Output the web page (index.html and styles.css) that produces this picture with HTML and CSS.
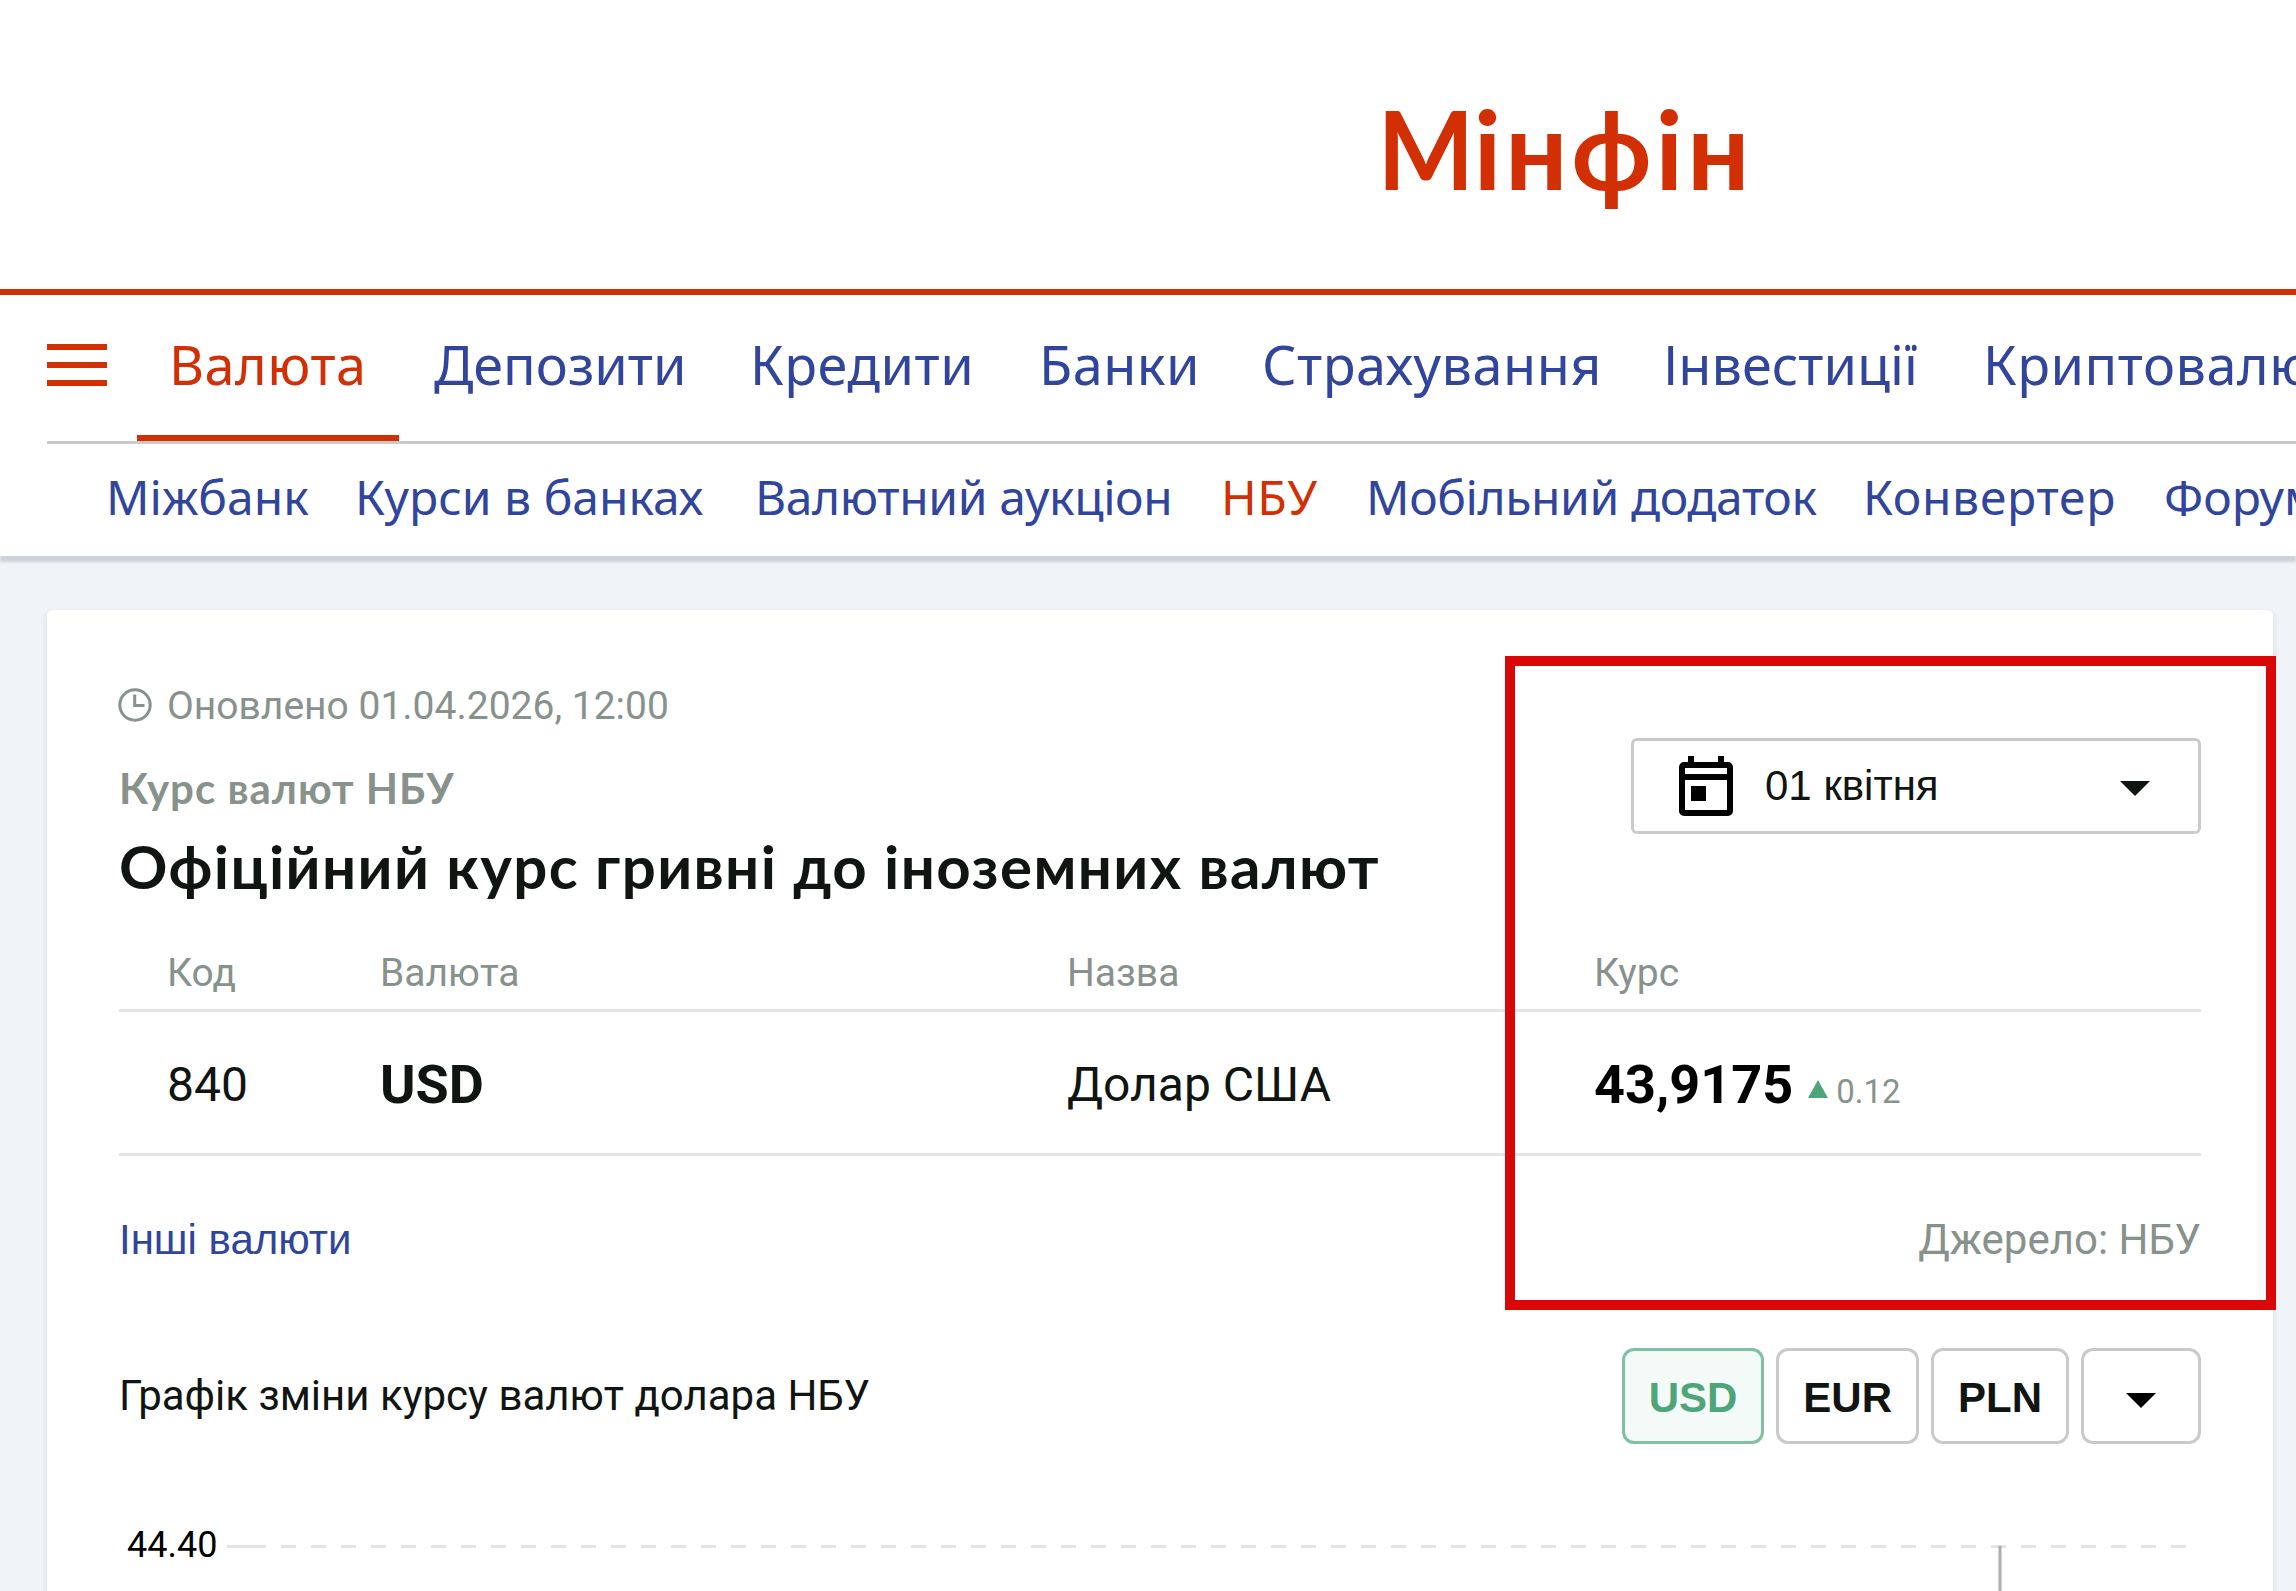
FILE: index.html
```html
<!DOCTYPE html>
<html lang="uk">
<head>
    <meta charset="UTF-8">
    <meta name="viewport" content="width=device-width, initial-scale=1.0">
    <title>Курс валют НБУ - Мінфін</title>
    <link rel="stylesheet" href="styles.css">
</head>
<body>
    <div class="header">
        <div class="logo-box"><a class="logo"><span>М</span>інфін</a></div>
        <div class="menu">
            <div class="burger"><span></span><span></span><span></span></div>
            <ul class="nav">
                <li class="active">Валюта</li>
                <li class="tight">Депозити</li>
                <li>Кредити</li>
                <li>Банки</li>
                <li>Страхування</li>
                <li class="tight">Інвестиції</li>
                <li>Криптовалюти</li>
            </ul>
        </div>
        <ul class="subnav">
            <li>Міжбанк</li>
            <li>Курси в банках</li>
            <li class="tight">Валютний аукціон</li>
            <li class="active">НБУ</li>
            <li class="tight">Мобільний додаток</li>
            <li class="loose">Конвертер</li>
            <li>Форум</li>
        </ul>
    </div>

    <div class="card">
        <div class="card-head">
            <div class="titles">
                <div class="updated">
                    <svg class="clock" width="34" height="34" viewBox="0 0 34 34">
                        <circle cx="17" cy="17" r="15.2" fill="none" stroke="#88928c" stroke-width="3"/>
                        <path d="M16.7 6.5V17.5H26.5" fill="none" stroke="#88928c" stroke-width="3"/>
                    </svg>
                    <span>Оновлено 01.04.2026, 12:00</span>
                </div>
                <h2>Курс валют НБУ</h2>
                <h1>Офіційний курс гривні до іноземних валют</h1>
            </div>
            <div class="date">
                <svg class="calendar" width="72" height="72" viewBox="0 0 24 24">
                    <path d="M6 1h2v2h8V1h2v2h1.300a1.700 1.700 0 0 1 1.700 1.700v14.600a1.700 1.700 0 0 1-1.700 1.700H4.700A1.700 1.700 0 0 1 3 19.300V4.700A1.700 1.700 0 0 1 4.700 3H6zM5 5v2h14V5zM5 9v10h14V9zM7 11h5v5H7z" fill="#000" fill-rule="evenodd"/>
                </svg>
                <span class="date-text">01 квітня</span>
                <span class="caret"></span>
            </div>
        </div>

        <div class="row row-head">
            <span>Код</span>
            <span>Валюта</span>
            <span>Назва</span>
            <span>Курс</span>
        </div>
        <div class="row row-data">
            <span>840</span>
            <b>USD</b>
            <span>Долар США</span>
            <div class="rate"><b>43,9175</b><i class="up"></i><small>0.12</small></div>
        </div>

        <div class="links">
            <a>Інші валюти</a>
            <span>Джерело: НБУ</span>
        </div>

        <div class="chart-head">
            <span>Графік зміни курсу валют долара НБУ</span>
            <div class="btns">
                <button class="selected">USD</button>
                <button>EUR</button>
                <button>PLN</button>
                <button class="more"><span class="caret"></span></button>
            </div>
        </div>
        <svg class="chart" width="2082" height="147" viewBox="0 0 2082 147">
            <text x="8" y="113">44.40</text>
            <path d="M108 102.500H132" stroke="#e4e4e4" stroke-width="3"/>
            <path d="M132 102.500H2067" stroke="#e4e4e4" stroke-width="3" stroke-dasharray="15 15"/>
            <path d="M1881 102V147" stroke="#a9adab" stroke-width="3"/>
        </svg>
    </div>

    <!-- рамка навколо курсу -->
    <div class="frame"></div>
</body>
</html>
```
FILE: styles.css
```css
*{
    margin: 0;
    padding: 0;
    box-sizing: border-box;
}
html, body{
    height: 1591px;
    overflow: hidden;
}
body{
    position: relative;
    background: #f0f4f8;
    color: #101512;
    font-family: Roboto, sans-serif;
}
ul{
    list-style: none;
}

/* header */
.header{
    height: 556px;
    background: #fff;
    box-shadow: 0 6px 3px rgba(0, 0, 0, .14);
    position: relative;
}
.logo-box{
    height: 295px;
    padding: 81px 0 0 1377px;
    border-bottom: 6px solid #d22f05;
}
.logo{
    display: block;
    font: 700 110px/132px Lato, sans-serif;
    letter-spacing: 3.6px;
    color: #d22f05;
}
.logo span{
    display: inline-block;
    margin-right: -11px;
    transform: scaleX(.93);
    transform-origin: 8px 0;
}
.menu{
    display: flex;
    height: 149px;
    margin-left: 47px;
    border-bottom: 3px solid #c9cac9;
}
.burger{
    width: 60px;
    margin: 49px 30px 0 0;
    flex: none;
}
.burger span{
    display: block;
    height: 6px;
    margin-bottom: 12px;
    background: #d22f05;
}
.nav{
    display: grid;
    grid-template-columns: 265px 315px 289px 223px 402px 319px 420px;
    font: 54px/138px "Noto Sans", sans-serif;
    letter-spacing: .5px;
    color: #30459b;
}
.nav li{
    height: 146px;
    margin-right: 3px;
    padding-left: 33px;
    white-space: nowrap;
}
.nav .active{
    padding-left: 32px;
    color: #d22f05;
    border-bottom: 6px solid #d22f05;
}
.nav .tight{
    padding-left: 32px;
    letter-spacing: 0;
}
.subnav{
    display: grid;
    grid-template-columns: 249px 400px 466px 145px 497px 301px 200px;
    padding-left: 106px;
    font: 48px/106px "Noto Sans", sans-serif;
    color: #30459b;
    white-space: nowrap;
}
.subnav .active{
    letter-spacing: .7px;
    color: #d22f05;
}
.subnav .tight{
    letter-spacing: -.4px;
}
.subnav .loose{
    letter-spacing: .7px;
}

/* card */
.card{
    width: 2226px;
    height: 981px;
    margin: 54px 0 0 47px;
    padding: 73px 72px 0;
    background: #fff;
    border-radius: 6px 6px 0 0;
    box-shadow: 0 3px 6px rgba(0, 0, 0, .12);
}
.card-head{
    display: flex;
    justify-content: space-between;
}
.updated{
    display: flex;
    align-items: center;
    height: 46px;
    font-size: 39px;
    line-height: 46px;
    color: #88928c;
}
.clock{
    margin: 0 14px 2px -1px;
}
.updated span{
    margin-left: 1px;
}
h2{
    margin-top: 34px;
    font: 700 42px/50px Lato, sans-serif;
    letter-spacing: 1px;
    color: #88928c;
}
h1{
    margin-top: 17px;
    font: 700 60px/72px Lato, sans-serif;
    letter-spacing: 1.4px;
}
.date{
    display: flex;
    align-items: center;
    width: 570px;
    height: 96px;
    margin-top: 55px;
    padding: 0 48px 0 36px;
    border: 3px solid #c9cac9;
    border-radius: 6px;
    font: 42px/90px "Liberation Sans", Arial, sans-serif;
}
.calendar{
    margin-top: 6px;
}
.date-text{
    margin-left: 23px;
    flex: 1;
}
.caret{
    display: block;
    border: 15px solid transparent;
    border-top-color: #101512;
    border-bottom: 0;
    margin-top: 5px;
}

.row{
    display: grid;
    grid-template-columns: 213px 687px 527px 1fr;
    align-items: start;
    padding-left: 48px;
    border-bottom: 3px solid #e5e5e5;
}
.row-head{
    padding-top: 48px;
    height: 110px;
    font-size: 39px;
    line-height: 46px;
    color: #88928c;
}
.row-data{
    padding-top: 44px;
    height: 144px;
    font-size: 48px;
    line-height: 57px;
}
.row-data b{
    font-size: 54px;
}
.rate{
    display: flex;
    align-items: baseline;
    color: #000;
}
.up{
    margin: 0 8px 0 15px;
    border: 10.5px solid transparent;
    border-top: 0;
    border-bottom: 18px solid #4ea57a;
    transform: translateY(-5px);
}
.rate small{
    font-size: 33px;
    color: #88928c;
}

.links{
    display: flex;
    justify-content: space-between;
    margin-top: 59px;
    font-size: 42px;
    line-height: 50px;
    color: #88928c;
}
.links a{
    font-family: "Liberation Sans", Arial, sans-serif;
    color: #30459b;
}
.chart-head{
    display: flex;
    justify-content: space-between;
    align-items: center;
    margin-top: 83px;
    font-size: 42px;
}
.chart-head > span{
    margin-top: -2px;
}
.btns{
    display: flex;
    gap: 12px;
}
.btns button{
    height: 96px;
    padding: 3px 24px 0;
    background: #fff;
    border: 3px solid #c9cac9;
    border-radius: 12px;
    font: 700 42px/87px "Liberation Sans", Arial, sans-serif;
    color: #101512;
}
.btns .selected{
    background: #f4faf8;
    border-color: #80c0a3;
    color: #4ea57a;
}
.btns .more{
    width: 120px;
    padding-left: 42px;
}
.btns .caret{
    width: 30px;
    border-top-color: #000;
}
.chart{
    display: block;
    font-size: 36px;
}

/* червона рамка */
.frame{
    position: absolute;
    left: 1505px;
    top: 656px;
    width: 771px;
    height: 654px;
    border: 10px solid #d90808;
}
```
